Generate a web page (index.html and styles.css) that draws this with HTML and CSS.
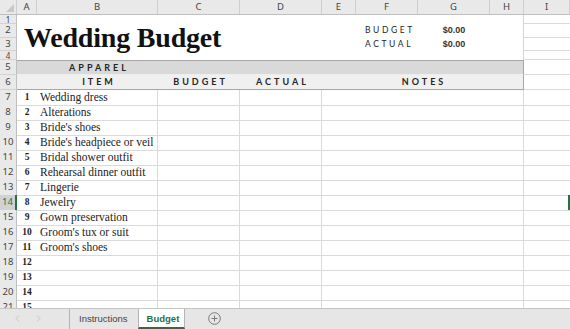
FILE: index.html
```html
<!DOCTYPE html>
<html lang="en">
<head>
  <meta charset="UTF-8" />
  <meta name="viewport" content="width=device-width, initial-scale=1.0"/>
  <title>Wedding Budget</title>
  <link rel="stylesheet" href="styles.css">
</head>
<body>

  <div class="workbook">
    <div class="sheet">

      <div class="row colhead">
        <div class="corner"></div>
        <div>A</div><div>B</div><div>C</div><div>D</div><div>E</div><div>F</div><div>G</div><div>H</div><div>I</div>
      </div>

      <!-- Rows 1-4: title block -->
      <div class="top">
        <div class="rh">1</div>
        <div class="rh">2</div>
        <div class="rh">3</div>
        <div class="rh">4</div>
        <div class="title-panel">
          <h1 class="title">Wedding Budget</h1>
          <div class="sum-label budget-line">BUDGET</div>
          <div class="sum-value budget-line">$0.00</div>
          <div class="sum-label actual-line">ACTUAL</div>
          <div class="sum-value actual-line">$0.00</div>
        </div>
        <div class="cell"></div>
        <div class="cell"></div>
        <div class="cell"></div>
        <div class="cell"></div>
      </div>

      <div class="row section">
        <div class="rh">5</div>
        <div class="band"></div>
        <div class="band label">APPAREL</div>
        <div class="band rest"></div>
        <div class="cell"></div>
      </div>

      <div class="row heads">
        <div class="rh">6</div>
        <div class="band"></div>
        <div class="band label">ITEM</div>
        <div class="band label">BUDGET</div>
        <div class="band label">ACTUAL</div>
        <div class="band label notes">NOTES</div>
        <div class="cell"></div>
      </div>

      <div class="row item">
        <div class="rh">7</div><div class="num">1</div><div class="name">Wedding dress</div>
        <div class="amt"></div><div class="amt"></div><div class="notes"></div><div class="cell"></div>
      </div>
      <div class="row item">
        <div class="rh">8</div><div class="num">2</div><div class="name">Alterations</div>
        <div class="amt"></div><div class="amt"></div><div class="notes"></div><div class="cell"></div>
      </div>
      <div class="row item">
        <div class="rh">9</div><div class="num">3</div><div class="name">Bride's shoes</div>
        <div class="amt"></div><div class="amt"></div><div class="notes"></div><div class="cell"></div>
      </div>
      <div class="row item">
        <div class="rh">10</div><div class="num">4</div><div class="name">Bride's headpiece or veil</div>
        <div class="amt"></div><div class="amt"></div><div class="notes"></div><div class="cell"></div>
      </div>
      <div class="row item">
        <div class="rh">11</div><div class="num">5</div><div class="name">Bridal shower outfit</div>
        <div class="amt"></div><div class="amt"></div><div class="notes"></div><div class="cell"></div>
      </div>
      <div class="row item">
        <div class="rh">12</div><div class="num">6</div><div class="name">Rehearsal dinner outfit</div>
        <div class="amt"></div><div class="amt"></div><div class="notes"></div><div class="cell"></div>
      </div>
      <div class="row item">
        <div class="rh">13</div><div class="num">7</div><div class="name">Lingerie</div>
        <div class="amt"></div><div class="amt"></div><div class="notes"></div><div class="cell"></div>
      </div>
      <div class="row item">
        <div class="rh active">14</div><div class="num">8</div><div class="name">Jewelry</div>
        <div class="amt"></div><div class="amt"></div><div class="notes"></div><div class="cell sel-edge"></div>
      </div>
      <div class="row item">
        <div class="rh">15</div><div class="num">9</div><div class="name">Gown preservation</div>
        <div class="amt"></div><div class="amt"></div><div class="notes"></div><div class="cell"></div>
      </div>
      <div class="row item">
        <div class="rh">16</div><div class="num">10</div><div class="name">Groom's tux or suit</div>
        <div class="amt"></div><div class="amt"></div><div class="notes"></div><div class="cell"></div>
      </div>
      <div class="row item">
        <div class="rh">17</div><div class="num">11</div><div class="name">Groom's shoes</div>
        <div class="amt"></div><div class="amt"></div><div class="notes"></div><div class="cell"></div>
      </div>
      <div class="row item">
        <div class="rh">18</div><div class="num">12</div><div class="name"></div>
        <div class="amt"></div><div class="amt"></div><div class="notes"></div><div class="cell"></div>
      </div>
      <div class="row item">
        <div class="rh">19</div><div class="num">13</div><div class="name"></div>
        <div class="amt"></div><div class="amt"></div><div class="notes"></div><div class="cell"></div>
      </div>
      <div class="row item">
        <div class="rh">20</div><div class="num">14</div><div class="name"></div>
        <div class="amt"></div><div class="amt"></div><div class="notes"></div><div class="cell"></div>
      </div>
      <div class="row item">
        <div class="rh">21</div><div class="num">15</div><div class="name"></div>
        <div class="amt"></div><div class="amt"></div><div class="notes"></div><div class="cell"></div>
      </div>

    </div>

    <!-- Sheet tabs -->
    <div class="tabbar">
      <div class="nav">
        <svg width="5" height="7" viewBox="0 0 5 7"><path d="M4 0.5 L1 3.5 L4 6.5" fill="none" stroke="#c4c4c4" stroke-width="1"/></svg>
        <svg width="5" height="7" viewBox="0 0 5 7"><path d="M1 0.5 L4 3.5 L1 6.5" fill="none" stroke="#c4c4c4" stroke-width="1"/></svg>
      </div>
      <div class="tab">Instructions</div>
      <div class="tab active">Budget</div>
      <div class="add">
        <svg width="13" height="13" viewBox="0 0 13 13">
          <circle cx="6.5" cy="6.5" r="5.8" fill="none" stroke="#7a7a7a" stroke-width="1"/>
          <path d="M6.5 3.5 V9.5 M3.5 6.5 H9.5" stroke="#7a7a7a" stroke-width="1"/>
        </svg>
      </div>
    </div>
  </div>

</body>
</html>
```

FILE: styles.css
```css
* {
  box-sizing: border-box;
}

body {
  margin: 0;
  background: #fff;
  font-family: 'Noto Sans', sans-serif;
  color: #222;
}

.workbook {
  width: 570px;
  height: 329px;
  display: flex;
  flex-direction: column;
  overflow: hidden;
}

.sheet {
  height: 308px;
  overflow: hidden;
}

/* every sheet row shares the same column widths */
.row {
  display: grid;
  grid-template-columns: 17px 20px 121px 82px 82px 34px 62px 72px 34px 1fr;
  height: 15px;
}

.cell {
  border-bottom: 1px solid #dadada;
}

/* Column and row headers */
.colhead {
  background: #e9e9e9;
  border-bottom: 1px solid #bfbfbf;
}

.colhead div {
  font-size: 9.5px;
  line-height: 14px;
  color: #444;
  text-align: center;
  border-right: 1px solid #cfcfcf;
}

.colhead .corner {
  position: relative;
}

.colhead .corner::after {
  content: "";
  position: absolute;
  right: 2px;
  bottom: 2px;
  border-left: 8px solid transparent;
  border-bottom: 8px solid #c8c8c8;
}

.rh {
  background: #e9e9e9;
  border-right: 1px solid #bfbfbf;
  border-bottom: 1px solid #d3d3d3;
  font-size: 9.5px;
  line-height: 14px;
  color: #444;
  text-align: center;
  overflow: hidden;
}

.rh.active {
  background: #d2d2d2;
  color: #217346;
  border-right: 2px solid #217346;
}

.sel-edge {
  box-shadow: inset -2px 0 0 #217346;
}

/* Title block */
.top {
  display: grid;
  grid-template-columns: 17px 507px 1fr;
  grid-template-rows: 9px 14px 13px 9px;
  grid-auto-flow: column;
}

.top .rh {
  line-height: 12px;
}

.top .rh:first-child,
.top .rh:nth-child(4) {
  font-size: 8px;
  line-height: 9px;
}

.title-panel {
  grid-row: span 4;
  display: grid;
  grid-template-columns: 20px 121px 82px 82px 34px 62px 72px 34px;
  grid-template-rows: 9px 14px 13px 9px;
  border-right: 1px solid #d4d4d4;
}

.title {
  grid-column: 1 / 5;
  grid-row: 2 / 4;
  margin: 0;
  padding-left: 7px;
  font-family: 'Liberation Serif', serif;
  font-weight: bold;
  font-size: 28px;
  letter-spacing: -0.2px;
  line-height: 27px;
  color: #111;
}

.sum-label {
  grid-column: 6;
  padding-left: 9px;
  font-family: Lato, sans-serif;
  font-size: 8.5px;
  letter-spacing: 2.6px;
  color: #262626;
  line-height: 13px;
}

.sum-value {
  grid-column: 7;
  text-align: center;
  font-family: 'Liberation Sans', sans-serif;
  font-weight: bold;
  font-size: 9px;
  color: #333;
  line-height: 13px;
}

.budget-line {
  grid-row: 2;
}

.actual-line {
  grid-row: 3;
}

/* Section header rows */
.section .band {
  background: #d9d9d9;
  border-top: 1px solid #a6a6a6;
  border-bottom: 1px solid #ededed;
}

.section .rest {
  grid-column: span 6;
  border-right: 1px solid #a6a6a6;
}

.heads .band {
  background: #f0f0f0;
  border-bottom: 1px solid #a6a6a6;
}

.heads .notes {
  grid-column: span 4;
  border-right: 1px solid #a6a6a6;
}

.band.label {
  font-family: Lato, sans-serif;
  font-weight: bold;
  font-size: 9px;
  letter-spacing: 3px;
  text-indent: 3px;
  line-height: 14px;
  color: #262626;
  text-align: center;
}

.section .label {
  line-height: 13px;
}

/* Item rows */
.item > div {
  border-bottom: 1px solid #dadada;
}

.item .rh {
  border-bottom-color: #d3d3d3;
}

.item .num {
  font-family: 'Liberation Serif', serif;
  font-weight: bold;
  font-size: 9.5px;
  line-height: 15px;
  text-align: center;
  color: #222;
}

.item .name {
  font-family: 'Liberation Serif', serif;
  font-size: 11.5px;
  line-height: 15px;
  padding-left: 3px;
  white-space: nowrap;
  border-right: 1px solid #dadada;
}

.item .amt {
  border-right: 1px solid #dadada;
}

.item .notes {
  grid-column: span 4;
  border-right: 1px solid #dadada;
}

/* Tab bar */
.tabbar {
  height: 21px;
  display: flex;
  align-items: stretch;
  background: #e6e6e6;
  border-top: 1px solid #c6c6c6;
  font-family: 'Liberation Sans', sans-serif;
  font-size: 9.5px;
  color: #444;
}

.nav {
  width: 69px;
  display: flex;
  align-items: center;
  gap: 16px;
  padding-left: 15px;
  padding-bottom: 2px;
}

.tab {
  display: flex;
  align-items: center;
  padding: 0 10px 2px 9px;
  border-left: 1px solid #b4b4b4;
}

.tab.active {
  padding: 0 5px 0 8px;
  background: #fff;
  color: #217346;
  font-weight: bold;
  border-right: 1px solid #b4b4b4;
  border-bottom: 2px solid #217346;
}

.add {
  display: flex;
  align-items: center;
  padding-left: 23px;
  padding-bottom: 2px;
}
```
